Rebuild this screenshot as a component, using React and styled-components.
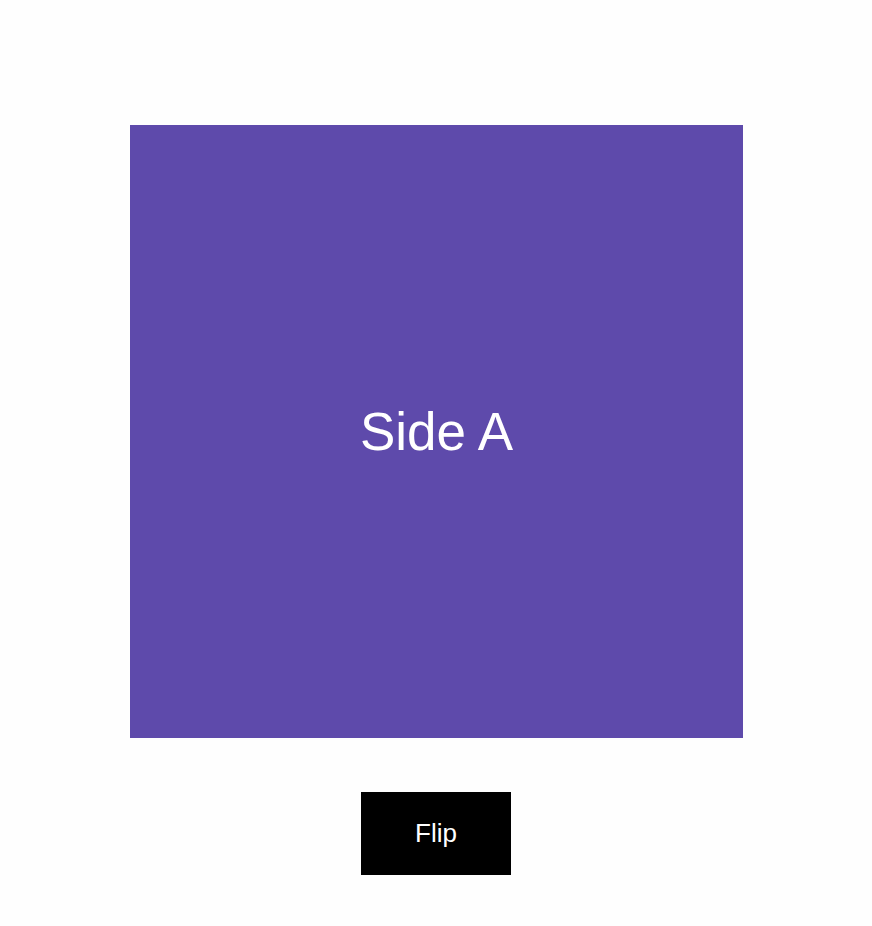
import React, { useState } from 'react';
import styled, { createGlobalStyle } from 'styled-components';

const GlobalStyle = createGlobalStyle`
  html, body {
    margin: 0;
    padding: 0;
    background: #fefefe;
    font-family: 'Liberation Sans', Arial, sans-serif;
  }
`;

const Page = styled.div`
  display: flex;
  flex-direction: column;
  align-items: center;
  padding-top: 125px;
  gap: 54px;
  min-height: 926px;
  box-sizing: border-box;
`;

const Card = styled.div`
  width: 613px;
  height: 613px;
  display: flex;
  align-items: center;
  justify-content: center;
  background: ${(p) => (p.$flipped ? '#2f8f6b' : '#5e4aab')};
  color: #fff;
  font-size: 53px;
  margin-left: 1px;
`;

const FlipButton = styled.button`
  width: 150px;
  height: 83px;
  background: #000;
  color: #fff;
  border: none;
  font-family: 'Liberation Sans', Arial, sans-serif;
  font-size: 26px;
  cursor: pointer;
`;

export default function App() {
  const [flipped, setFlipped] = useState(false);

  return (
    <>
      <GlobalStyle />
      <Page>
        <Card $flipped={flipped}>{flipped ? 'Side B' : 'Side A'}</Card>
        <FlipButton onClick={() => setFlipped(!flipped)}>Flip</FlipButton>
      </Page>
    </>
  );
}
